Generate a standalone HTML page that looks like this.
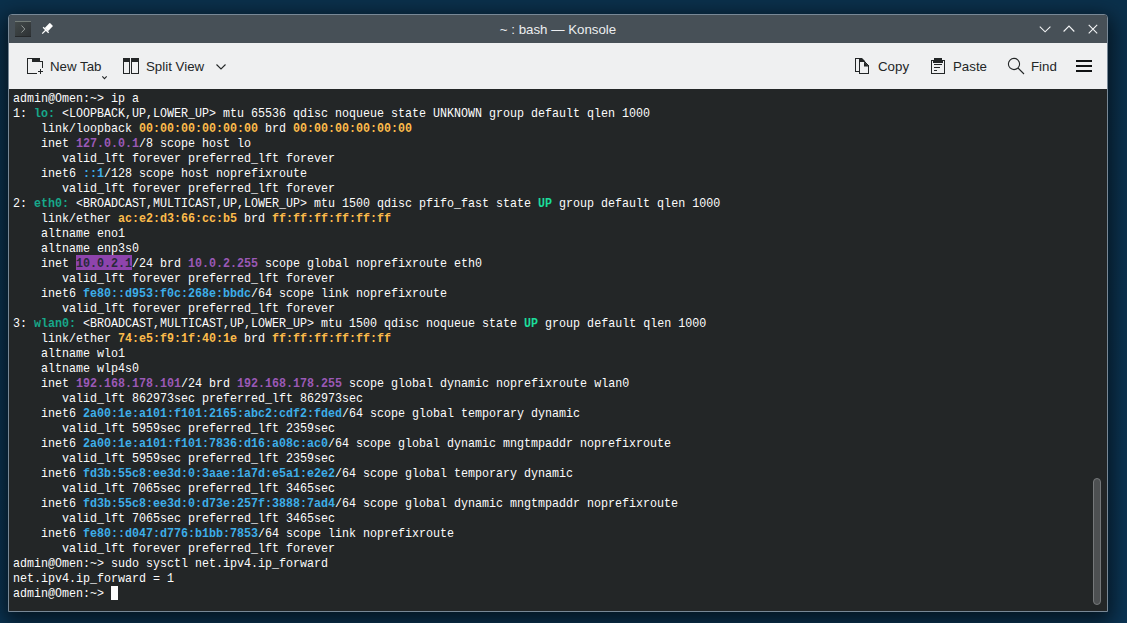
<!DOCTYPE html>
<html><head><meta charset="utf-8">
<style>
*{margin:0;padding:0;box-sizing:border-box}
html,body{width:1127px;height:623px;overflow:hidden}
body{background:linear-gradient(to bottom,#0b304b,#0b3453);position:relative;font-family:"Liberation Sans",sans-serif}
#win{position:absolute;left:8px;top:14px;width:1100px;height:598px;border:1px solid #788896;border-radius:4px 4px 0 0;background:#232627;box-shadow:0 6px 20px 4px rgba(0,0,0,0.6)}
#winin{position:absolute;left:0;top:0;width:1098px;height:596px;overflow:hidden;border-radius:3px 3px 0 0}
#title{position:absolute;left:0;top:0;width:1098px;height:28px;background:#475057}
#title .t{position:absolute;left:0;right:0;top:7px;text-align:center;color:#eceef0;font-size:13.3px}
#tool{position:absolute;left:0;top:28px;width:1098px;height:46px;background:#eff0f1}
#term{position:absolute;left:0;top:74px;width:1098px;height:523px;background:#232627}
.lbl{position:absolute;color:#232627;font-size:13.3px;top:16px}
pre{position:absolute;left:4px;top:2px;font-family:"Liberation Mono",monospace;font-size:13.5px;line-height:15px;color:#fcfcfc;transform-origin:0 0;transform:scaleX(0.86420)}
.c{color:#17a88a;font-weight:bold}
.g{color:#1cdc9a;font-weight:bold}
.y{color:#fdbc4b;font-weight:bold}
.m{color:#9b59b6;font-weight:bold}
.b{color:#3daee9;font-weight:bold}
.sel{color:#272a3a;font-weight:bold}
#selbox{position:absolute;left:67px;top:166px;width:56px;height:15px;background:#8e44ad}
#cur{position:absolute;left:102px;top:497px;width:7px;height:14px;background:#fcfcfc}
.cur{background:#fcfcfc;color:#232627}
</style></head><body>
<div id="win"><div id="winin">
 <div id="title"><div class="t">~ : bash — Konsole</div></div>
 <div id="tool">
  <span class="lbl" style="left:41px">New Tab</span>
  <span class="lbl" style="left:137px">Split View</span>
  <span class="lbl" style="left:869px">Copy</span>
  <span class="lbl" style="left:944px">Paste</span>
  <span class="lbl" style="left:1022px">Find</span>
 </div>
 <div id="term"><div id="selbox"></div><div id="cur"></div>
<pre>admin@Omen:~&gt; ip a
1: <span class="c">lo: </span>&lt;LOOPBACK,UP,LOWER_UP&gt; mtu 65536 qdisc noqueue state UNKNOWN group default qlen 1000
    link/loopback <span class="y">00:00:00:00:00:00</span> brd <span class="y">00:00:00:00:00:00</span>
    inet <span class="m">127.0.0.1</span>/8 scope host lo
       valid_lft forever preferred_lft forever
    inet6 <span class="b">::1</span>/128 scope host noprefixroute
       valid_lft forever preferred_lft forever
2: <span class="c">eth0: </span>&lt;BROADCAST,MULTICAST,UP,LOWER_UP&gt; mtu 1500 qdisc pfifo_fast state <span class="g">UP </span>group default qlen 1000
    link/ether <span class="y">ac:e2:d3:66:cc:b5</span> brd <span class="y">ff:ff:ff:ff:ff:ff</span>
    altname eno1
    altname enp3s0
    inet <span class="sel">10.0.2.1</span>/24 brd <span class="m">10.0.2.255</span> scope global noprefixroute eth0
       valid_lft forever preferred_lft forever
    inet6 <span class="b">fe80::d953:f0c:268e:bbdc</span>/64 scope link noprefixroute
       valid_lft forever preferred_lft forever
3: <span class="c">wlan0: </span>&lt;BROADCAST,MULTICAST,UP,LOWER_UP&gt; mtu 1500 qdisc noqueue state <span class="g">UP </span>group default qlen 1000
    link/ether <span class="y">74:e5:f9:1f:40:1e</span> brd <span class="y">ff:ff:ff:ff:ff:ff</span>
    altname wlo1
    altname wlp4s0
    inet <span class="m">192.168.178.101</span>/24 brd <span class="m">192.168.178.255</span> scope global dynamic noprefixroute wlan0
       valid_lft 862973sec preferred_lft 862973sec
    inet6 <span class="b">2a00:1e:a101:f101:2165:abc2:cdf2:fded</span>/64 scope global temporary dynamic
       valid_lft 5959sec preferred_lft 2359sec
    inet6 <span class="b">2a00:1e:a101:f101:7836:d16:a08c:ac0</span>/64 scope global dynamic mngtmpaddr noprefixroute
       valid_lft 5959sec preferred_lft 2359sec
    inet6 <span class="b">fd3b:55c8:ee3d:0:3aae:1a7d:e5a1:e2e2</span>/64 scope global temporary dynamic
       valid_lft 7065sec preferred_lft 3465sec
    inet6 <span class="b">fd3b:55c8:ee3d:0:d73e:257f:3888:7ad4</span>/64 scope global dynamic mngtmpaddr noprefixroute
       valid_lft 7065sec preferred_lft 3465sec
    inet6 <span class="b">fe80::d047:d776:b1bb:7853</span>/64 scope link noprefixroute
       valid_lft forever preferred_lft forever
admin@Omen:~&gt; sudo sysctl net.ipv4.ip_forward
net.ipv4.ip_forward = 1
admin@Omen:~&gt; </pre>
 </div>
</div></div>
<svg id="ov" width="1127" height="623" viewBox="0 0 1127 623" style="position:absolute;left:0;top:0" shape-rendering="crispEdges">
 <!-- konsole icon -->
 <defs><linearGradient id="kg" x1="0" y1="0" x2="1" y2="1"><stop offset="0" stop-color="#434a4a"/><stop offset="1" stop-color="#2d3134"/></linearGradient></defs>
 <rect x="15" y="21" width="16" height="16" fill="url(#kg)"/>
 <rect x="15" y="21" width="16" height="1" fill="#737c78"/>
 <rect x="15" y="36" width="16" height="1" fill="#25282a"/>
 <path d="M21.5,25.5 L24.8,29 L21.5,32.5" fill="none" stroke="#a3a9a7" stroke-width="0.85" shape-rendering="auto"/>
 <!-- pin -->
 <g shape-rendering="auto" fill="#ffffff" stroke="#ffffff" transform="translate(45.9,30) rotate(-45)">
  <rect x="0.6" y="-2.3" width="7.2" height="4.6" rx="0.7" stroke="none"/>
  <path d="M0,-3.9 V3.9" stroke-width="1.3" fill="none"/>
  <path d="M0,0 H-5.2" stroke-width="1.2" fill="none"/>
 </g>
 <!-- title buttons -->
 <g shape-rendering="auto" fill="none" stroke="#f4f5f6" stroke-width="1.1">
  <path d="M1039.8,26.6 L1045.1,31.8 L1050.4,26.6"/>
  <path d="M1063.6,31.5 L1069,26 L1074.3,31.5"/>
  <path d="M1088.7,24.8 L1097.2,33.3 M1097.2,24.8 L1088.7,33.3"/>
 </g>
 <!-- new tab icon -->
 <g fill="#232627">
  <rect x="27" y="58" width="1" height="16"/>
  <rect x="27" y="58" width="13" height="1"/>
  <rect x="32" y="58" width="8" height="4"/>
  <rect x="32" y="61" width="11" height="1"/>
  <rect x="42" y="61" width="1" height="7"/>
  <rect x="27" y="73" width="10" height="1"/>
  <rect x="40" y="69" width="1" height="5"/>
  <rect x="38" y="71" width="5" height="1"/>
 </g>
 <path d="M102.3,76.4 L104.5,78.6 L106.7,76.4" fill="none" stroke="#232627" stroke-width="1.1" shape-rendering="auto"/>
 <!-- split view icon -->
 <g fill="#232627">
  <rect x="123" y="58" width="7" height="4"/>
  <rect x="123" y="58" width="1" height="16"/>
  <rect x="129" y="58" width="1" height="16"/>
  <rect x="123" y="73" width="7" height="1"/>
  <rect x="131" y="58" width="8" height="4"/>
  <rect x="131" y="58" width="1" height="16"/>
  <rect x="138" y="58" width="1" height="16"/>
  <rect x="131" y="73" width="8" height="1"/>
 </g>
 <path d="M216.5,64.5 L221,69 L225.5,64.5" fill="none" stroke="#232627" stroke-width="1.1" shape-rendering="auto"/>
 <!-- copy icon -->
 <g fill="none" stroke="#232627" stroke-width="1">
  <path d="M859.5,71.5 H855.5 V58.5 H861.5 L864.5,61.5"/>
  <path d="M859.5,61.5 H864.5 L868.5,65.5 V73.5 H859.5 Z"/>
 </g>
 <g fill="#232627" shape-rendering="auto">
  <path d="M864,61.5 L869,66.5 L864,66.5 Z"/>
  <path d="M859,58 L862,58 L865.5,61.5 L859,62 Z"/>
 </g>
 <!-- paste icon -->
 <g fill="#232627">
  <rect x="931" y="60" width="1" height="14"/>
  <rect x="944" y="60" width="1" height="14"/>
  <rect x="931" y="73" width="14" height="1"/>
  <rect x="931" y="60" width="3" height="1"/>
  <rect x="942" y="60" width="3" height="1"/>
  <rect x="934" y="58" width="8" height="2"/>
  <rect x="933" y="60" width="10" height="3"/>
  <rect x="934" y="64" width="8" height="1"/>
  <rect x="934" y="67" width="6" height="1"/>
  <rect x="934" y="70" width="3" height="1"/>
 </g>
 <!-- find icon -->
 <g fill="none" stroke="#232627" stroke-width="1.1" shape-rendering="auto">
  <circle cx="1014" cy="64" r="5.6"/>
  <path d="M1018,68 L1024,74"/>
 </g>
 <!-- hamburger -->
 <g fill="#111314">
  <rect x="1076" y="60" width="16" height="2"/>
  <rect x="1076" y="65" width="16" height="2"/>
  <rect x="1076" y="70" width="16" height="2"/>
 </g>
 <!-- scrollbar thumb -->
 <rect x="1093.5" y="478.5" width="7" height="126" rx="3.5" ry="3.5" fill="#4d5052" stroke="#75787a" stroke-width="1" shape-rendering="auto"/>
</svg>
</body></html>
